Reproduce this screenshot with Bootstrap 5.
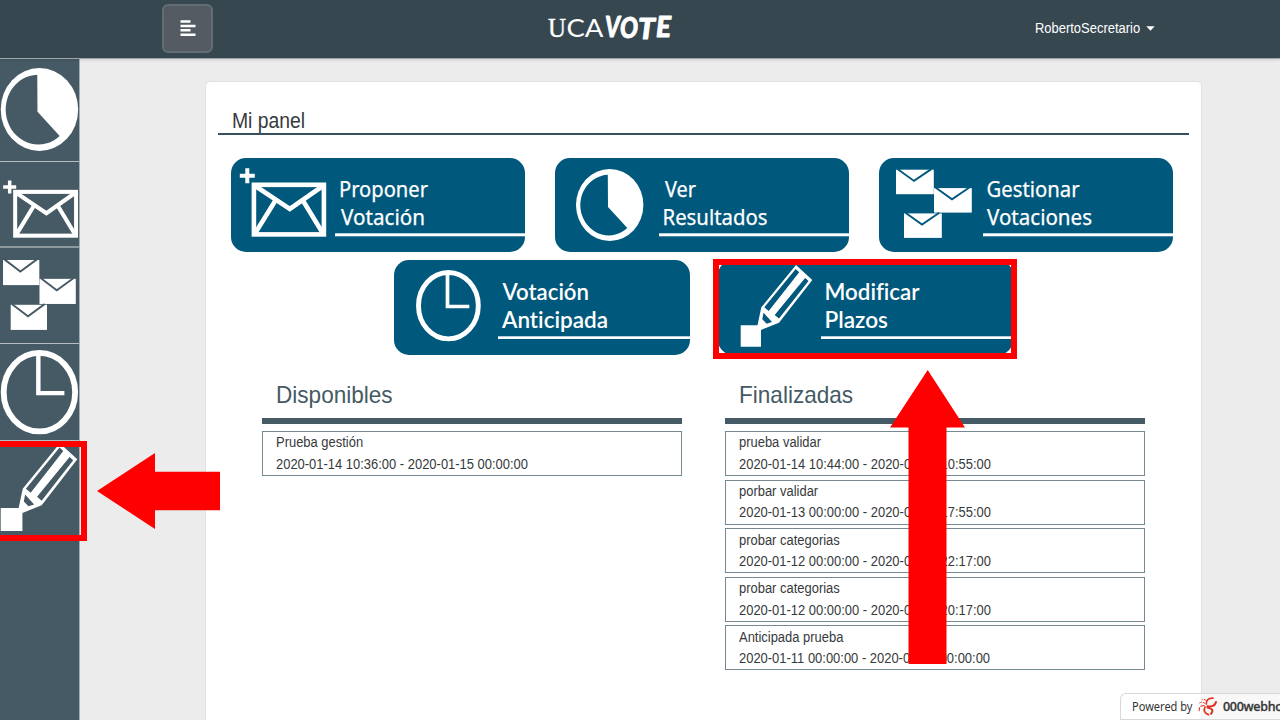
<!DOCTYPE html>
<html lang="es">
<head>
<meta charset="utf-8">
<meta name="viewport" content="width=device-width, initial-scale=1">
<title>UCAVOTE - Mi panel</title>
<link rel="stylesheet" href="https://cdn.jsdelivr.net/npm/bootstrap@5.3.0/dist/css/bootstrap.min.css">
<style>
body{font-family:"Liberation Sans",Arial,sans-serif;font-size:14px;color:#373a3c;background:#ececec;height:720px;overflow:hidden}
svg{display:block}
.cond{display:inline-block;transform:scaleX(.925);transform-origin:left center;white-space:nowrap}
.topbar{height:59px;background:#37474f;border-bottom:1px solid #9ea4a7;box-shadow:0 1px 3px rgba(0,0,0,.12);padding:0 125px 0 162px;z-index:2}
.menu-btn{width:51px;height:49px;background:#545b62;border:2px solid #626c75;border-radius:6px;padding:0 0 2px;margin-bottom:1px}
.menu-btn svg{margin:auto}
.brand-logo{margin:0 0 4px 333px;overflow:visible}
.user-link{width:120px;margin-left:auto;margin-bottom:1px}
.caret-down{margin-left:-3px}
.shell{height:661px}
.side{width:80px;background:#455a64;border-right:1px solid #a3adb2}
.side a{color:#455a64;border-bottom:1px solid #b5bec2;overflow:hidden}
.side a.thick{border-bottom:2px solid #8c999f}
.side a:last-child{border:0}
.panel{width:997px;height:660px;margin:22px 0 0 125px;border:1px solid #e2e2e2;border-radius:5px;padding:0 12px}
.panel-title{font-size:21.5px;line-height:26px;height:52.5px;padding:26px 0 0 13.5px;border-bottom:2.5px solid #37505c;margin:0;font-weight:400}
.panel-title .cond{transform:scaleX(.9)}
.tiles{color:#00587c;margin:23px 0 0 12.5px;gap:30px}
.tiles.second{margin:8px 0 0 175.5px;gap:28px}
.tiles text{fill:#fff;font-family:"Noto Sans","Open Sans",sans-serif;font-size:21px;stroke:#fff;stroke-width:.25px}
.tiles.second text{font-family:Lato,sans-serif;font-size:22.5px;font-weight:600;stroke:none;font-variant-ligatures:none;font-feature-settings:"liga" 0,"dlig" 0}
.lists{margin:25.5px 0 0 43.5px;gap:43px}
.vlist{width:420px}
.vlist h2{font-size:24px;line-height:30px;color:#455a64;font-weight:400;margin:0;padding-left:14px;height:37.5px;border-bottom:6px solid #455a64;box-sizing:content-box}
.vlist h2 .cond{transform:scaleX(.94)}
.vlist ul{margin-top:7.5px!important;display:grid;gap:3.6px}
.vlist li{height:45px;border:1px solid #768892;padding:.4px 0 0 13.8px;line-height:21.5px}
.hosted{right:0;bottom:0;width:160px;height:27px;background:rgba(255,255,255,.62);border:1px solid #d8d8d8;border-right:0;border-radius:6px 0 0 0;font:11.5px "Noto Sans",sans-serif;color:#333;padding-left:11px;white-space:nowrap;overflow:hidden;z-index:3}
.hosted span{width:65px}
.hosted span i{display:inline-block;font-style:normal;font-size:12px;transform:scaleX(.92);transform-origin:left}
.hosted svg{margin-right:6px}
.hosted b{font-weight:500;font-size:12.5px;letter-spacing:-.3px;-webkit-text-stroke:.3px #333}
.marks{left:0;top:0;z-index:5;pointer-events:none}
</style>
<script src="https://cdn.jsdelivr.net/npm/bootstrap@5.3.0/dist/js/bootstrap.bundle.min.js"></script>
</head>
<body class="position-relative">
<svg width="0" height="0" class="position-absolute">
<defs>
<g id="pie"><ellipse cx="54.7" cy="47" rx="33.7" ry="36" fill="#fff"/><path d="M52.8 16.8L53 49L72.3 70A28.4 30.3 0 1 1 52.8 16.8Z" fill="currentColor"/></g>
<path id="plus" d="M16.3 10.2V25.2M8.8 17.7H23.8" stroke="#fff" stroke-width="4"/>
<g id="mail" fill="none" stroke="#fff" stroke-width="4.6"><rect x="23.4" y="26.8" width="70" height="49.6"/><path d="M24 27.5L59.3 51L93 27.5M44.3 43.5L24.2 76M73 43.5L92.8 76"/></g>
<g id="env"><rect width="37.8" height="24.5" fill="#fff"/><path d="M1.5-.6L18 11.2L35.3-.6" fill="none" stroke="currentColor" stroke-width="1.9"/></g>
<g id="mails"><use href="#env" x="17" y="11.7"/><use href="#env" x="55" y="30.1"/><use href="#env" x="25" y="55.4"/></g>
<g id="clock" fill="none" stroke="#fff"><ellipse cx="54.4" cy="45.7" rx="29.9" ry="33.2" stroke-width="4.9"/><path d="M53.5 14V46.5H75.3" stroke-width="3.7"/></g>
<g id="pencil"><path d="M22.7 65.3H39.5L43.3 47.3L78 5L94.3 20L61 62.7L43 70V86.7H22.7Z" fill="#fff"/><path fill="currentColor" d="M77.7 9L81.2 12.2L50.7 51.1L46.3 47.3ZM87.1 17.9L90.5 20.9L61 58.5L56.7 54.9ZM45.5 52.7L44.3 59.3L48.7 63.7L54 62Z"/></g>
</defs>
</svg>

<nav class="topbar d-flex align-items-center position-relative">
  <button class="menu-btn btn flex-shrink-0" aria-label="Menú"><svg width="16" height="18" viewBox="0 0 16 18"><path d="M.5 2.4H10.5M.5 6.9H15.5M.5 11.3H10.5M.5 15.7H15.5" stroke="#fff" stroke-width="2.5"/></svg></button>
  <svg class="brand-logo" width="132" height="40" viewBox="-2 0 132 40" fill="#fff">
    <text y="29.5"><tspan x="0" font-family="Liberation Serif, serif" font-size="27" stroke="#fff" stroke-width=".4" textLength="18" lengthAdjust="spacingAndGlyphs">U</tspan><tspan x="18.5" font-family="Lato, sans-serif" font-size="25.5" font-weight="400" textLength="37" lengthAdjust="spacingAndGlyphs">CA</tspan></text>
    <g font-family="Lato, sans-serif" font-weight="900" font-style="italic" font-size="29" stroke="#fff" stroke-width=".9" stroke-linejoin="round">
      <text x="57" y="30" textLength="15" lengthAdjust="spacingAndGlyphs">V</text>
      <text x="72" y="31" textLength="18" lengthAdjust="spacingAndGlyphs">O</text>
      <text x="90" y="32" textLength="17" lengthAdjust="spacingAndGlyphs">T</text>
      <text x="108" y="30" textLength="15" lengthAdjust="spacingAndGlyphs">E</text>
    </g>
  </svg>
  <div class="user-link dropdown"><a href="#" class="text-decoration-none text-nowrap text-white d-flex align-items-center" data-bs-toggle="dropdown"><span class="cond">RobertoSecretario</span><svg class="caret-down" width="9" height="5" viewBox="0 0 9 5"><path d="M.3.3H8.7L4.5 4.7Z" fill="#fff"/></svg></a></div>
</nav>

<div class="shell d-flex">
  <aside class="side d-flex flex-column flex-shrink-0">
    <a href="#"><svg width="79" height="102"><use href="#pie" transform="translate(-23.4 -3.7) scale(1.149 1.153)"/></svg></a>
    <a href="#" class="thick"><svg width="79" height="84"><use href="#plus" transform="translate(-4.5 9.6) scale(.87 .87)"/><use href="#mail" transform="translate(-5.2 6.2) scale(.87 .883)"/></svg></a>
    <a href="#"><svg width="79" height="95"><use href="#mails" transform="translate(-13.3 0) scale(.96 1.025)"/></svg></a>
    <a href="#"><svg width="79" height="96"><use href="#clock" transform="translate(-25.6 -5.8) scale(1.195 1.182)"/></svg></a>
    <a href="#"><svg width="79" height="95"><use href="#pencil" transform="translate(-23.6 -3.2) scale(1.07 1.075)"/></svg></a>
  </aside>

  <main class="panel bg-white">
    <h1 class="panel-title"><span class="cond">Mi panel</span></h1>
    <div class="tiles d-flex">
      <svg width="294" height="94"><rect width="294" height="94" rx="15" fill="currentColor"/><use href="#plus"/><use href="#mail" x="-.5"/><text x="108" y="38.5" textLength="89" lengthAdjust="spacingAndGlyphs">Proponer</text><text x="110" y="66.5" textLength="84" lengthAdjust="spacingAndGlyphs">Votación</text><rect x="104" y="75.3" width="190" height="3" fill="#fff"/></svg>
      <svg width="294" height="94"><rect width="294" height="94" rx="15" fill="currentColor"/><use href="#pie"/><text x="110" y="38.5" textLength="31" lengthAdjust="spacingAndGlyphs">Ver</text><text x="107.5" y="66.5" textLength="105" lengthAdjust="spacingAndGlyphs">Resultados</text><rect x="104" y="75.3" width="190" height="3" fill="#fff"/></svg>
      <svg width="294" height="94"><rect width="294" height="94" rx="15" fill="currentColor"/><use href="#mails"/><text x="107.5" y="38.5" textLength="93" lengthAdjust="spacingAndGlyphs">Gestionar</text><text x="108" y="66.5" textLength="105" lengthAdjust="spacingAndGlyphs">Votaciones</text><rect x="104" y="75.3" width="190" height="3" fill="#fff"/></svg>
    </div>
    <div class="tiles second d-flex">
      <svg width="296" height="95"><rect width="296" height="95" rx="15" fill="currentColor"/><use href="#clock"/><text x="108.5" y="40" textLength="86.5" lengthAdjust="spacingAndGlyphs">Votación</text><text x="108" y="68" textLength="106" lengthAdjust="spacingAndGlyphs">Anticipada</text><rect x="104" y="76.3" width="192" height="2.7" fill="#fff"/></svg>
      <svg width="295" height="95"><rect width="295" height="95" rx="15" fill="currentColor"/><use href="#pencil"/><text x="106.5" y="40" textLength="95" lengthAdjust="spacingAndGlyphs">Modificar</text><text x="106.5" y="68" textLength="63.5" lengthAdjust="spacingAndGlyphs">Plazos</text><rect x="103" y="76.3" width="192" height="2.7" fill="#fff"/></svg>
    </div>
    <div class="lists d-flex">
      <section class="vlist"><h2><span class="cond">Disponibles</span></h2>
        <ul class="list-unstyled m-0">
          <li><span class="cond">Prueba gestión<br>2020-01-14 10:36:00 - 2020-01-15 00:00:00</span></li>
        </ul>
      </section>
      <section class="vlist"><h2><span class="cond">Finalizadas</span></h2>
        <ul class="list-unstyled m-0">
          <li><span class="cond">prueba validar<br>2020-01-14 10:44:00 - 2020-01-14 10:55:00</span></li>
          <li><span class="cond">porbar validar<br>2020-01-13 00:00:00 - 2020-01-13 17:55:00</span></li>
          <li><span class="cond">probar categorias<br>2020-01-12 00:00:00 - 2020-01-12 22:17:00</span></li>
          <li><span class="cond">probar categorias<br>2020-01-12 00:00:00 - 2020-01-12 20:17:00</span></li>
          <li><span class="cond">Anticipada prueba<br>2020-01-11 00:00:00 - 2020-01-12 00:00:00</span></li>
        </ul>
      </section>
    </div>
  </main>
</div>

<div class="hosted position-absolute d-flex align-items-center">
  <span class="d-inline-block flex-shrink-0"><i>Powered by</i></span>
  <svg class="flex-shrink-0" width="20" height="19" viewBox="0 0 20 19" fill="none" stroke="#e3301f" stroke-linecap="round"><path d="M19 5Q17.5 10.5 10.5 9.2" stroke-width="2"/><path d="M16 1.2Q9 1 9.3 7" stroke-width="1.7"/><path d="M10.5 10.5Q18 12 14 16.8" stroke-width="2"/><path d="M8 10Q5.5 15.5 11.5 17.6" stroke-width="1.7"/><path d="M7 8.5Q1.5 9 2.2 14" stroke-width="1.1" stroke-dasharray="3 2"/><path d="M8 6.5Q5 3.5 1 7M9 3.5Q7 1.5 5 2.5" stroke-width=".9" stroke-dasharray="2 2"/></svg>
  <b>000webhost</b>
</div>

<svg class="marks position-absolute" width="1280" height="720" fill="#f00">
  <path d="M97 491L155 453V471.7H220V510.3H155V529Z"/>
  <path d="M927.7 370L965 427.5H946.5V664H908.5V427.5H890Z"/>
  <path d="M0 444H84V538H0M716 262H1014V356H716Z" fill="none" stroke="#f00" stroke-width="6"/>
</svg>
</body>
</html>
